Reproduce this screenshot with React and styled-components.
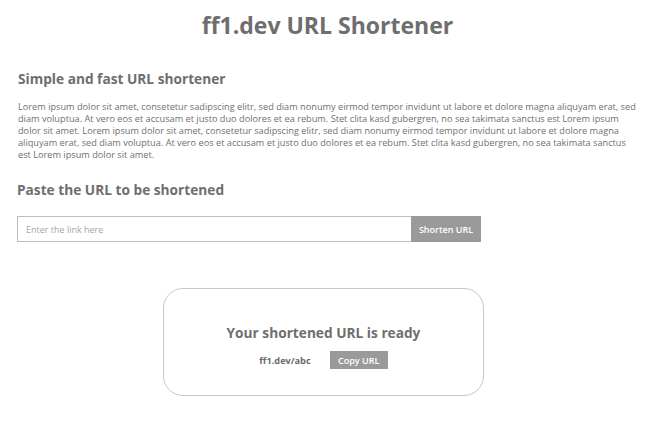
import styled, { createGlobalStyle } from "styled-components";

const GlobalStyle = createGlobalStyle`
  body {
    margin: 0;
    font-family: "Open Sans", "Liberation Sans", sans-serif;
    color: #6b6b6b;
    background: #fff;
  }
`;

const App = () => {
  return (
    <>
      <GlobalStyle />
      <SPage>
        <STitle>ff1.dev URL Shortener</STitle>
        <SSection>
          <SHeading>Simple and fast URL shortener</SHeading>
          <SText>
            Lorem ipsum dolor sit amet, consetetur sadipscing elitr, sed diam nonumy eirmod tempor invidunt ut labore et dolore magna aliquyam erat, sed diam voluptua. At vero eos et accusam et justo duo dolores et ea rebum. Stet clita kasd gubergren, no sea takimata sanctus est Lorem ipsum dolor sit amet. Lorem ipsum dolor sit amet, consetetur sadipscing elitr, sed diam nonumy eirmod tempor invidunt ut labore et dolore magna aliquyam erat, sed diam voluptua. At vero eos et accusam et justo duo dolores et ea rebum. Stet clita kasd gubergren, no sea takimata sanctus est Lorem ipsum dolor sit amet.
          </SText>
        </SSection>
        <SSection>
          <SHeading $big>Paste the URL to be shortened</SHeading>
          <SForm onSubmit={(e) => e.preventDefault()}>
            <SInput placeholder="Enter the link here" />
            <SButton type="submit">Shorten URL</SButton>
          </SForm>
        </SSection>
        <SCard>
          <SCardTitle>Your shortened URL is ready</SCardTitle>
          <SResultRow>
            <SShortLink>ff1.dev/abc</SShortLink>
            <SButton $small>Copy URL</SButton>
          </SResultRow>
        </SCard>
      </SPage>
    </>
  );
};

const SPage = styled.div`
  padding: 8px 13px 30px 17px;
  display: flex;
  flex-direction: column;
`;

const STitle = styled.h1`
  margin: 0;
  font-size: 23px;
  font-weight: 700;
  text-align: center;
  color: #6e6e6e;
  line-height: 34px;
`;

const SSection = styled.section`
  display: flex;
  flex-direction: column;
`;

const SHeading = styled.h2`
  margin: ${(p) => (p.$big ? "19px 0 16px 0" : "27px 0 12px 1px")};
  font-size: 13.7px;
  font-weight: 700;
  line-height: 20px;
  color: #6e6e6e;
`;

const SText = styled.p`
  margin: 0 1px 0 1px;
  font-size: 9.2px;
  line-height: 12px;
  color: #6f6f6f;
`;

const SForm = styled.form`
  display: flex;
  width: 464px;
  height: 26px;
`;

const SInput = styled.input`
  flex: 1;
  box-sizing: border-box;
  border: 1px solid #bdbdbd;
  border-right: none;
  padding: 0 8px;
  font-family: inherit;
  font-size: 9px;
  color: #6b6b6b;
  outline: none;
  &::placeholder {
    color: #a6a6a6;
  }
`;

const SButton = styled.button`
  border: none;
  background: #9a9a9a;
  color: #fff;
  font-family: inherit;
  font-size: 9px;
  font-weight: 600;
  padding: 0;
  height: ${(p) => (p.$small ? "18px" : "26px")};
  width: ${(p) => (p.$small ? "58px" : "70px")};
  cursor: pointer;
`;

const SCard = styled.div`
  box-sizing: border-box;
  width: 321px;
  height: 108px;
  margin: 46px 0 0 146px;
  border: 1px solid #c8c8c8;
  border-radius: 20px;
  display: flex;
  flex-direction: column;
  align-items: center;
  padding-top: 34px;
`;

const SCardTitle = styled.h3`
  margin: 0 0 8px 0;
  font-size: 13.7px;
  font-weight: 700;
  line-height: 20px;
  color: #6e6e6e;
`;

const SResultRow = styled.div`
  display: flex;
  align-items: center;
  gap: 19px;
`;

const SShortLink = styled.span`
  font-size: 9.2px;
  font-weight: 700;
  color: #6b6b6b;
`;

export default App;
